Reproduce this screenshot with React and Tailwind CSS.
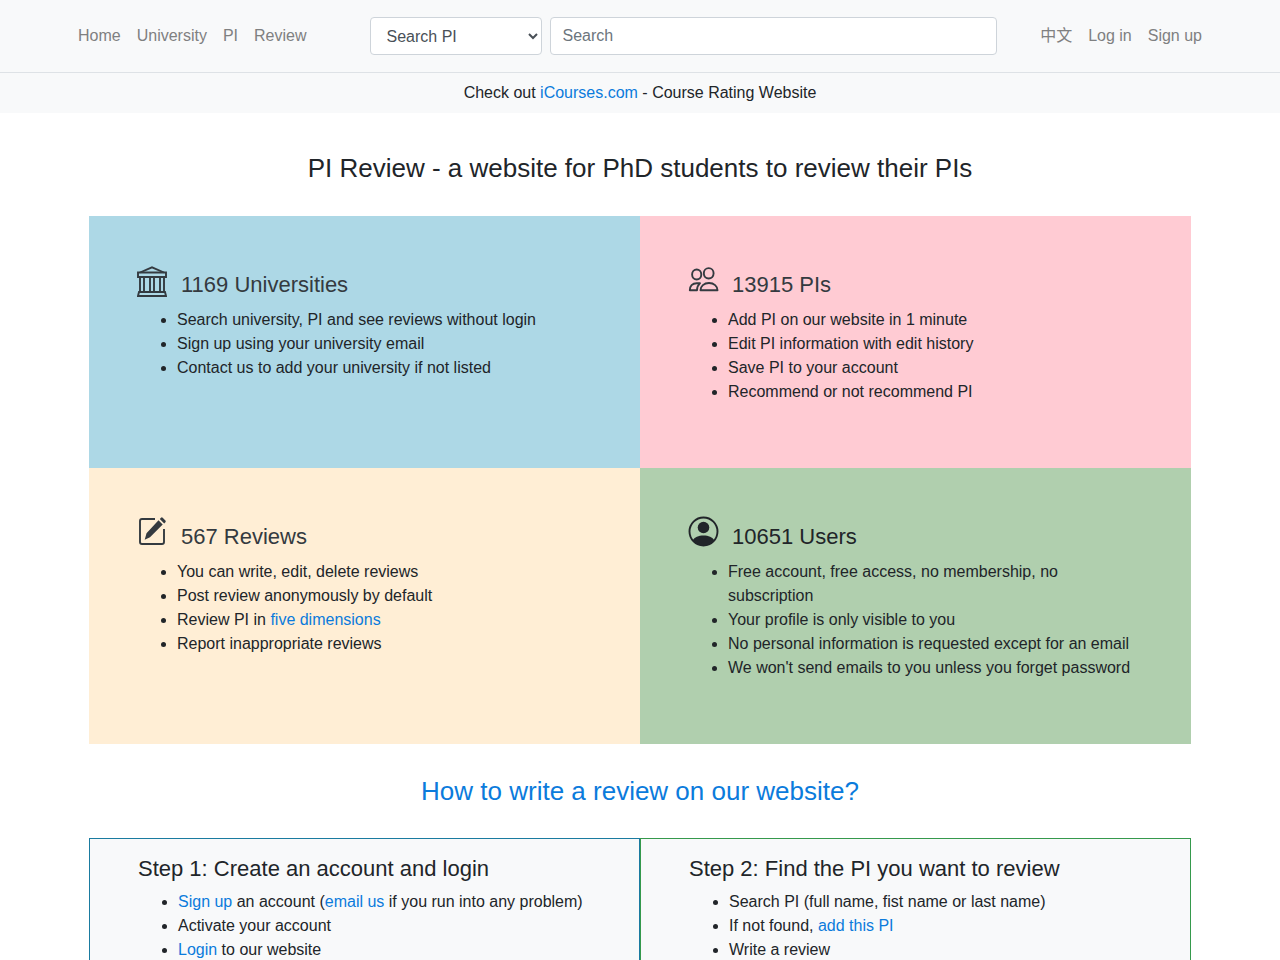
import React, { useState } from 'react';

const NAV_LINKS = ['Home', 'University', 'PI', 'Review'];
const ACCOUNT_LINKS = ['中文', 'Log in', 'Sign up'];

function BankIcon() {
  return (
    <svg viewBox="0 0 30 34" className="h-[34px] w-[30px] shrink-0" fill="none" stroke="currentColor" strokeWidth="1.9" aria-hidden="true">
      <path d="M3 8.5 15 3.3l12 5.2" />
      <path d="M1 8.5h28V13H1z" />
      <path d="M3 13v15M7 13v15M13 13v15M17 13v15M23 13v15M27 13v15" />
      <path d="M2 28h26l1 4H1z" />
    </svg>
  );
}

function PeopleIcon() {
  return (
    <svg viewBox="0 0 30 34" className="h-[34px] w-[30px] shrink-0 overflow-visible" fill="none" stroke="currentColor" strokeWidth="1.9" strokeLinejoin="round" aria-hidden="true">
      <ellipse cx="8.7" cy="10.5" rx="4.6" ry="5" />
      <ellipse cx="20.7" cy="9.3" rx="4.9" ry="5.2" />
      <path d="M12.5 26.2c0-4 3.5-7.2 8.500-7.200s8.500 3.200 8.500 7.200z" />
      <path d="M9 26.200H1.800c0-4 2.500-7 7-7H12C10 21.200 9 23.200 9 26.200z" />
    </svg>
  );
}

function PencilIcon() {
  return (
    <svg viewBox="0 0 30 34" className="h-[34px] w-[30px] shrink-0" aria-hidden="true">
      <path d="M18 3H5a2 2 0 0 0-2 2v21a2 2 0 0 0 2 2h20a2 2 0 0 0 2-2V13" fill="none" stroke="currentColor" strokeWidth="1.9" />
      <path d="m21.500 4.300 4.200 4.200-12.700 12.700-5.300 2.600 1.800-6.500zM22.800 3l1.200-1.200a1.200 1.200 0 0 1 1.700 0l2.700 2.700a1.200 1.200 0 0 1 0 1.700L27.200 7.400z" fill="currentColor" />
    </svg>
  );
}

function UserIcon() {
  return (
    <svg viewBox="0 0 30 34" className="h-[34px] w-[30px] shrink-0 overflow-visible" fill="currentColor" aria-hidden="true">
      <circle cx="15.5" cy="15.5" r="14" fill="none" stroke="currentColor" strokeWidth="1.9" />
      <circle cx="15.5" cy="11.5" r="5.8" />
      <path d="M4.500 24.500C6.500 21 10.500 19.400 15.500 19.400s9 1.600 11 5.100A14 14 0 0 1 4.500 24.500z" />
    </svg>
  );
}

function TextLink({ children }) {
  return <a href="#" className="text-[#0b7bdc] hover:underline">{children}</a>;
}

function NavLinks({ items }) {
  return (
    <div className="flex">
      {items.map((item) => (
        <a key={item} href="#" className="p-2 text-[#7f8081] hover:text-[#212529]">{item}</a>
      ))}
    </div>
  );
}

function Navbar() {
  const [type, setType] = useState('pi');
  const [query, setQuery] = useState('');

  return (
    <nav className="border-b border-[#dee2e6] bg-[#f8f9fa] py-4">
      <div className="mx-auto flex max-w-[1140px] items-center">
        <NavLinks items={NAV_LINKS} />
        <form className="mr-[35px] ml-[55px] flex flex-1 gap-2" onSubmit={(e) => e.preventDefault()}>
          <select aria-label="Search type" value={type} onChange={(e) => setType(e.target.value)}
            className="h-[38px] w-[172px] rounded border border-[#ced4da] bg-white px-3 text-[#495057]">
            <option value="pi">Search PI</option>
            <option value="university">Search University</option>
          </select>
          <input type="text" aria-label="Search" placeholder="Search" value={query} onChange={(e) => setQuery(e.target.value)}
            className="h-[38px] min-w-0 flex-1 rounded border border-[#ced4da] bg-white px-3 text-[#495057] placeholder:text-[#6c757d]" />
        </form>
        <NavLinks items={ACCOUNT_LINKS} />
      </div>
    </nav>
  );
}

function StatCard({ icon, title, color, linked = true, items }) {
  const heading = (
    <>
      {icon}
      <h2 className="pt-[6px] text-[22px] leading-[30px]">{title}</h2>
    </>
  );

  return (
    <section className={`px-12 py-12 ${color}`}>
      {linked
        ? <a href="#" className="flex gap-[14px] text-[#343a40]">{heading}</a>
        : <div className="flex gap-[14px]">{heading}</div>}
      <ul className="mt-2 mb-4 list-disc pl-10">
        {items.map((item, i) => <li key={i}>{item}</li>)}
      </ul>
    </section>
  );
}

function StepCard({ title, border, items }) {
  return (
    <section className={`border bg-[#f8f9fa] px-12 py-4 ${border}`}>
      <h3 className="mb-2 text-[22px] leading-[27px]">{title}</h3>
      <ul className="mb-4 list-disc pl-10">
        {items.map((item, i) => <li key={i}>{item}</li>)}
      </ul>
    </section>
  );
}

export default function App() {
  return (
    <div className="min-h-screen bg-white font-['Liberation_Sans','Noto_Sans_CJK_SC',sans-serif] text-base text-[#212529]">
      <Navbar />
      <p className="bg-[#f8f9fa] py-2 text-center">
        Check out <TextLink>iCourses.com</TextLink> - Course Rating Website
      </p>

      <main className="mx-auto max-w-[1102px]">
        <h1 className="pt-10 pb-[33px] text-center text-[26px] leading-[30px]">PI Review - a website for PhD students to review their PIs</h1>

        <div className="grid grid-cols-2">
          <StatCard icon={<BankIcon />} title="1169 Universities" color="bg-[#add8e6]"
            items={[
              'Search university, PI and see reviews without login',
              'Sign up using your university email',
              'Contact us to add your university if not listed',
            ]} />
          <StatCard icon={<PeopleIcon />} title="13915 PIs" color="bg-[#ffcbd3]"
            items={[
              'Add PI on our website in 1 minute',
              'Edit PI information with edit history',
              'Save PI to your account',
              'Recommend or not recommend PI',
            ]} />
          <StatCard icon={<PencilIcon />} title="567 Reviews" color="bg-[#ffeed5]"
            items={[
              'You can write, edit, delete reviews',
              'Post review anonymously by default',
              <>Review PI in <TextLink>five dimensions</TextLink></>,
              'Report inappropriate reviews',
            ]} />
          <StatCard icon={<UserIcon />} title="10651 Users" color="bg-[#b0cfae]" linked={false}
            items={[
              'Free account, free access, no membership, no subscription',
              'Your profile is only visible to you',
              'No personal information is requested except for an email',
              "We won't send emails to you unless you forget password",
            ]} />
        </div>

        <h2 className="py-8 text-center text-[26px] leading-[30px]"><TextLink>How to write a review on our website?</TextLink></h2>

        <div className="grid grid-cols-2">
          <StepCard title="Step 1: Create an account and login" border="border-[#1a7ba0]"
            items={[
              <><TextLink>Sign up</TextLink> an account (<TextLink>email us</TextLink> if you run into any problem)</>,
              'Activate your account',
              <><TextLink>Login</TextLink> to our website</>,
            ]} />
          <StepCard title="Step 2: Find the PI you want to review" border="border-[#35994c]"
            items={[
              'Search PI (full name, fist name or last name)',
              <>If not found, <TextLink>add this PI</TextLink></>,
              'Write a review',
            ]} />
        </div>
      </main>
    </div>
  );
}
